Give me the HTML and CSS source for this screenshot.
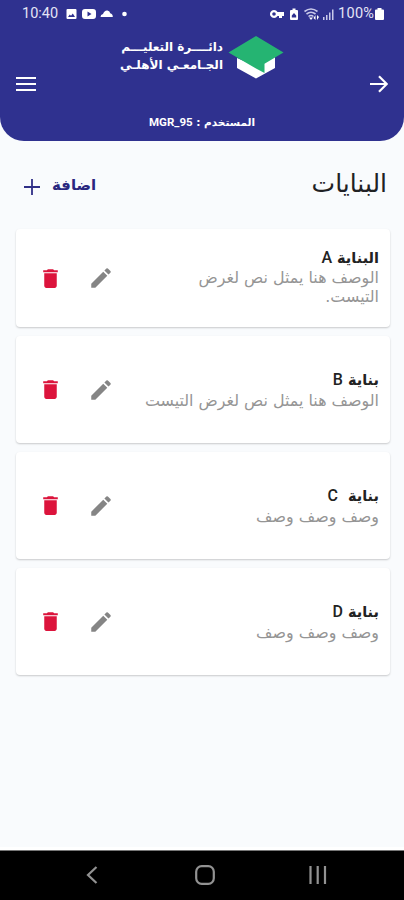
FILE: index.html
```html
<!DOCTYPE html>
<html lang="ar" dir="rtl">
<head>
<meta charset="utf-8"/>
<meta content="width=device-width, initial-scale=1.0" name="viewport"/>
<title>البنايات</title>
<link rel="stylesheet" href="styles.css">
</head>
<body>
<svg class="defs" width="0" height="0">
  <symbol id="icoTrash" viewBox="0 0 24 24"><path d="M6 19c0 1.1.9 2 2 2h8c1.1 0 2-.9 2-2V7H6v12zM19 4h-3.500l-1-1h-5l-1 1H5v2h14V4z"/></symbol>
  <symbol id="icoEdit" viewBox="0 0 24 24"><path d="M3 17.250V21h3.750L17.810 9.940l-3.750-3.750L3 17.250zM20.710 7.040a1 1 0 0 0 0-1.410l-2.340-2.340a1 1 0 0 0-1.410 0l-1.830 1.830 3.750 3.750 1.830-1.830z"/></symbol>
</svg>

<div class="header">
  <div class="status-bar" dir="ltr">
    <span class="clock">10:40</span>
    <svg class="status-left" width="62" height="14" viewBox="0 0 62 14" fill="#fff">
      <path fill-rule="evenodd" d="M1.500 2h8q1 0 1 1v8q0 1-1 1h-8q-1 0-1-1V3q0-1 1-1zM2 10h7L6.800 6.500 5 8.800 3.800 7.500z"/>
      <path fill-rule="evenodd" d="M19 2h8q3 0 3 3v4q0 3-3 3h-8q-3 0-3-3V5q0-3 3-3zM21.500 4.500v5l4-2.500z"/>
      <path d="M34.500 10q0-2.500 2.500-3 1.500-4 4.500-3.500 2.500.500 2.700 2.800 2.600.500 2.600 3.700z"/>
      <circle cx="58.500" cy="7" r="2.300"/>
    </svg>
    <svg class="status-right" width="66" height="16" viewBox="0 0 66 16" fill="#fff">
      <path fill-rule="evenodd" d="M4 4a4 4 0 1 0 3.500 6H9v2h3v-2h2V6H7.500A4 4 0 0 0 4 4zm0 2.200a1.800 1.800 0 1 1 0 3.600 1.800 1.800 0 0 1 0-3.600z"/>
      <path fill-rule="evenodd" d="M21 4h1.500V2.500h3V4H27q1 0 1 1v8q0 1-1 1h-6q-1 0-1-1V5q0-1 1-1zm3 3-2.200 2.500v2h4.400v-2z"/>
      <g fill="none" stroke="#c9c9ea" stroke-width="1.600"><path d="M34.500 5.500q6.500-5 13 0M36.500 8q4.500-3.500 9 0M38.500 10.500q2.500-2 5 0"/></g>
      <path d="m41 14-2-2.500h4zM45.500 9v5l-2-2zM47 14V9l2 2z"/>
      <path fill="#c9c9ea" d="M53 11h1.500v3H53zM56 9h1.500v5H56zM59 6.500h1.500V14H59zM62 3.500h1.500V14H62z"/>
    </svg>
    <span class="percent">100%</span>
    <svg class="battery" width="9" height="12" viewBox="0 0 9 12"><path fill="#fff" d="M2.500 1.500V0h4v1.500H8q1 0 1 1V11q0 1-1 1H1q-1 0-1-1V2.500q0-1 1-1z"/></svg>
  </div>

  <div class="nav" dir="ltr">
    <svg class="menu" width="20" height="16" viewBox="0 0 20 16"><path d="M0 2h20M0 8h20M0 14h20" stroke="#fff" stroke-width="2.200"/></svg>
    <div class="brand">
      <div class="brand-text" dir="rtl">
        <div>دائــــرة التعليـــم</div>
        <div>الجـامعـي الأهلـي</div>
      </div>
      <svg class="logo" width="56" height="44" viewBox="0 0 56 44">
        <path fill="#fff" d="M9 22v10l19 10.500L47 32V20L28 30z"/>
        <path fill="#25b472" d="M28 0l27.500 16.500-19 11.200V37L28 32.500.500 16.500z"/>
      </svg>
    </div>
    <svg class="forward" width="18" height="18" viewBox="0 0 18 18"><path d="M0 9h16.500M9 1.200 16.800 9 9 16.800" fill="none" stroke="#fff" stroke-width="2.200"/></svg>
  </div>

  <div class="user">المستخدم : <bdi>MGR_95</bdi></div>
</div>

<div class="container">
  <div class="title-row">
    <h1>البنايات</h1>
    <div class="add-btn">
      <span>اضافة</span>
      <svg width="16" height="16" viewBox="0 0 16 16"><path d="M0 8h16M8 0v16" stroke="#302f87" stroke-width="1.800"/></svg>
    </div>
  </div>

  <div class="card first">
    <div class="info">
      <h2>البناية <span>A</span></h2>
      <p>الوصف هنا يمثل نص لغرض<br>التيست.</p>
    </div>
    <svg class="edit" width="26" height="26"><use href="#icoEdit"/></svg>
    <svg class="trash" width="25" height="25"><use href="#icoTrash"/></svg>
  </div>
  <div class="card">
    <div class="info">
      <h2>بناية <span>B</span></h2>
      <p>الوصف هنا يمثل نص لغرض التيست</p>
    </div>
    <svg class="edit" width="26" height="26"><use href="#icoEdit"/></svg>
    <svg class="trash" width="25" height="25"><use href="#icoTrash"/></svg>
  </div>
  <div class="card">
    <div class="info">
      <h2>بناية&nbsp; <span>C</span></h2>
      <p>وصف وصف وصف</p>
    </div>
    <svg class="edit" width="26" height="26"><use href="#icoEdit"/></svg>
    <svg class="trash" width="25" height="25"><use href="#icoTrash"/></svg>
  </div>
  <div class="card">
    <div class="info">
      <h2>بناية <span>D</span></h2>
      <p>وصف وصف وصف</p>
    </div>
    <svg class="edit" width="26" height="26"><use href="#icoEdit"/></svg>
    <svg class="trash" width="25" height="25"><use href="#icoTrash"/></svg>
  </div>
</div>

<div class="bottom-bar" dir="ltr">
  <svg width="12" height="18" viewBox="0 0 12 18"><path d="M10.500 1 2 9l8.500 8"/></svg>
  <svg class="home" width="20" height="20" viewBox="0 0 20 20"><rect x="1.200" y="1.200" width="17.600" height="17.600" rx="5.500"/></svg>
  <svg width="18" height="18" viewBox="0 0 18 18"><path d="M1.500 0v18M8.700 0v18M16 0v18"/></svg>
</div>
</body>
</html>
```
FILE: styles.css
```css
* { box-sizing: border-box; }
body { font-family: "DejaVu Sans", sans-serif; background: #f9fbfd; margin: 0; height: 900px; display: flex; flex-direction: column; overflow: hidden; }
.defs { display: block; height: 0; flex: none; }
svg { display: block; flex: none; }

.header { background: #2f318f; color: #fff; height: 141px; border-radius: 0 0 24px 24px; }
.status-bar { display: flex; align-items: center; height: 27px; padding: 0 20px 0 22px; font-family: Roboto, sans-serif; font-size: 14.5px; color: #e4e4f5; }
.clock { width: 38px; }
.status-left { margin-left: 6px; }
.status-right { margin-left: auto; margin-right: 2px; }
.percent { width: 36px; font-size: 14.5px; letter-spacing: 0.3px; }
.battery { margin-left: 1px; }

.nav { display: flex; align-items: flex-start; height: 80px; padding: 9px 16px 0; }
.menu { margin-top: 40px; }
.forward { margin: 39px 0 0 auto; }
.brand { display: flex; gap: 5px; margin-left: 85px; }
.brand-text { width: 102px; padding-top: 2px; font-size: 12px; font-weight: bold; line-height: 18px; white-space: nowrap; }
.user { text-align: center; font-size: 10.5px; font-weight: bold; line-height: 30px; }
.user bdi { font-family: Roboto, sans-serif; font-size: 11.5px; }

.container { flex: 1; padding: 0 14px 0 16px; border-bottom: 3px solid #fff; }
.title-row { display: flex; justify-content: space-between; height: 88px; padding: 22px 3px 0 8px; }
h1 { margin: 0; font-size: 25px; font-weight: normal; line-height: 42px; color: #202124; }
.add-btn { display: flex; align-items: center; gap: 12px; height: 48px; color: #29277f; font-size: 15px; font-weight: bold; }
.add-btn span { padding-bottom: 4px; }

.card { display: flex; align-items: center; height: 107px; margin-bottom: 9px; padding: 0 11px 0 22px; background: #fff; border-radius: 4px; box-shadow: 0 1px 2px rgba(0,0,0,0.2); }
.card.first { height: 98px; }
.info { flex: 1; white-space: nowrap; }
h2 { margin: 0; font-size: 14.5px; font-weight: bold; line-height: 22px; color: #222; }
h2 span { font-family: Roboto, sans-serif; font-size: 16px; font-weight: 500; }
p { margin: 0; font-size: 15.9px; line-height: 20px; color: #959595; }
.first .info { padding-bottom: 3px; }
.first h2 { line-height: 20px; }
.first p { line-height: 19px; }
.edit { fill: #858585; margin-left: 25px; }
.trash { fill: #dc143c; }

.bottom-bar { display: flex; align-items: center; justify-content: space-between; height: 50px; padding: 0 77px 2px 86px; background: #000; border-top: 1px solid #777; }
.bottom-bar svg { fill: none; stroke: #929292; stroke-width: 2.2; }
.bottom-bar .home { margin-left: 2px; }
```
